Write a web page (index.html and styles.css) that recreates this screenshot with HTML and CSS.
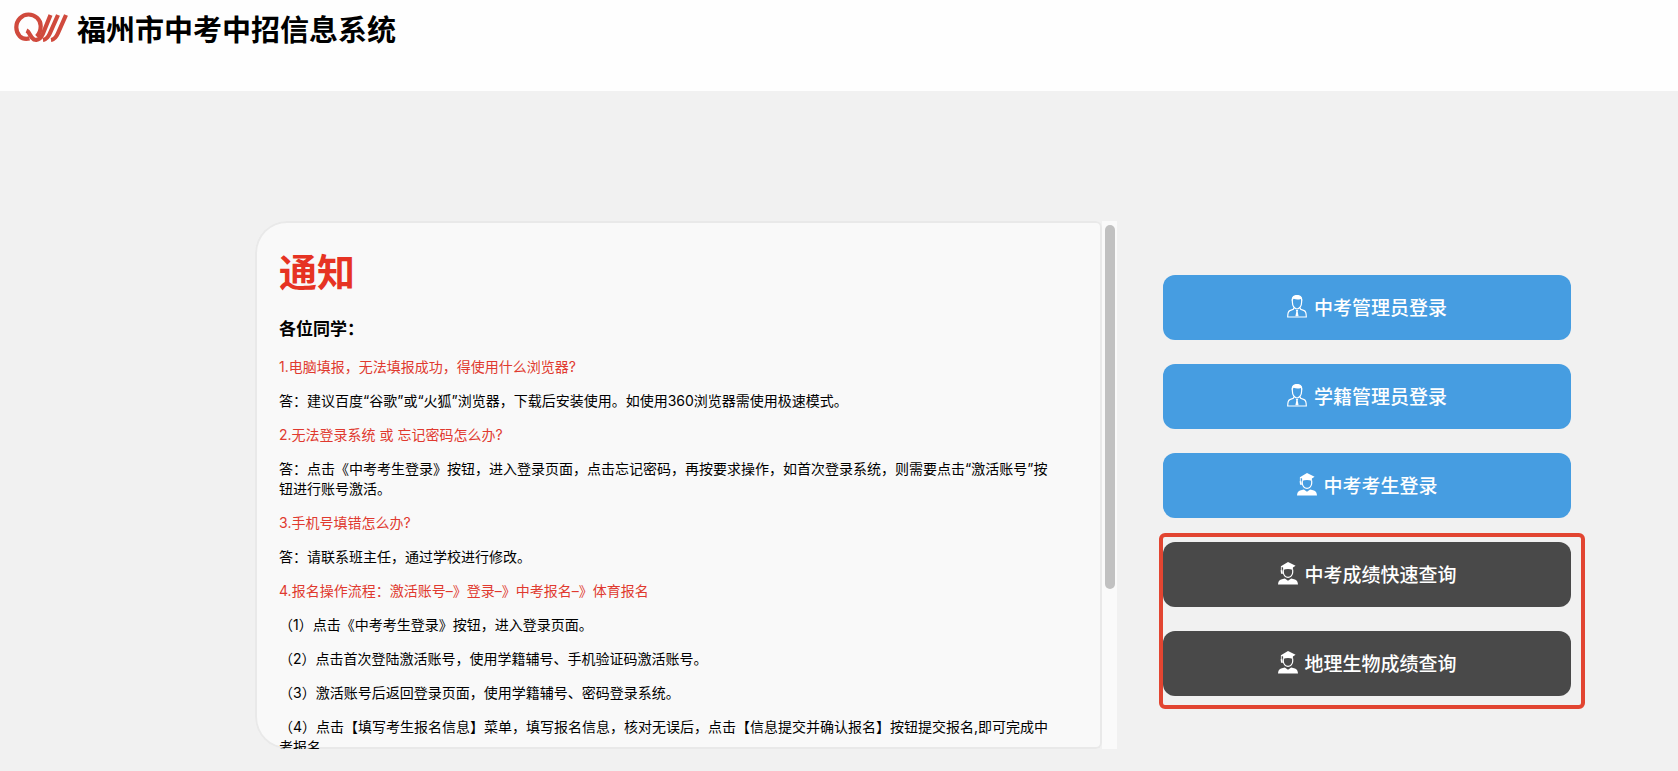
FILE: index.html
```html
<!DOCTYPE html>
<html lang="zh-CN">
<head>
<meta charset="utf-8">
<meta name="viewport" content="width=device-width, initial-scale=1">
<title>福州市中考中招信息系统</title>
<link rel="stylesheet" href="styles.css">
</head>
<body>
<svg class="sprite" aria-hidden="true">
  <symbol id="icon-admin" viewBox="0 0 20 23">
    <path d="M5.4 7.2C4.600 2.600 6.400.8 10 .8s5.400 1.800 4.600 6.400c0 3.500-2 6.800-4.600 6.800S5.400 10.700 5.400 7.200Z" fill="none" stroke="currentColor" stroke-width="1.200"/>
    <path d="M4.800 6.500C4.300 2 6.500 0 10 0s5.700 2 5.200 6.500L13.700 4C11.500 4.800 9 4.700 6.600 3.800Z" fill="currentColor"/>
    <path d="M7 12.800 6.300 14.300 2.800 15.600C1.200 16.300.7 18 .7 22H19.300C19.300 18 18.800 16.300 17.200 15.600L13.700 14.300 13 12.800" fill="none" stroke="currentColor" stroke-width="1.200"/>
    <path d="M8.800 15h2.400l-.5 1.500.9 4.800H8.400l.9-4.800Z" fill="currentColor"/>
  </symbol>
  <symbol id="icon-student" viewBox="0 0 20 23">
    <path d="M10 0 17.600 3.800 14.900 5.400V8C12 6.600 8 6.600 5.100 8V5.600L3.700 4.900V9.500H2.900V4.200Z" fill="currentColor"/>
    <path d="M5.300 7.500v2.700C5.300 13 7.500 15.400 10 15.400s4.700-2.400 4.700-5.200V7.500" fill="none" stroke="currentColor" stroke-width="1.200"/>
    <path d="M2.700 8.200h1.500l.8 3.500H3Z" fill="currentColor"/>
    <path d="M6.800 16.400 10 18.800 13.200 16.400 17 17.500C19 18.300 19.800 19.800 20 22.500H0C.2 19.800 1 18.300 3 17.500Z" fill="currentColor"/>
  </symbol>
</svg>

<header class="header">
  <svg class="logo" viewBox="0 0 54 30" aria-hidden="true">
    <g fill="none" stroke="#d04a3d">
      <path d="M15.500 26.400C7 28.500 2.300 22 2.300 15.300 2.300 8 8 2.500 14.500 2.500S26.700 7.500 26.700 14c0 4.500-1.500 8-4 10.500" stroke-width="4.200"/>
      <path d="M12.500 18.500C16 20 16 25.500 20 27.500 24.500 29 27 26 28.800 22L36.500 3M29 28C32.500 27.500 34 25.500 35.800 21.500L44 3M37 28C40.500 27.500 42 25.500 43.800 21.500L52 3" stroke-width="4.200"/>
    </g>
  </svg>
  <h1 class="title">福州市中考中招信息系统</h1>
</header>

<main class="main">
  <section class="notice" aria-labelledby="notice-title">
    <div class="notice-body">
      <h2 class="notice-title" id="notice-title">通知</h2>
      <h3 class="greeting">各位同学：</h3>
      <p class="line question">1.电脑填报，无法填报成功，得使用什么浏览器?</p>
      <p class="line">答：建议百度“谷歌”或“火狐”浏览器，下载后安装使用。如使用360浏览器需使用极速模式。</p>
      <p class="line question">2.无法登录系统 或 忘记密码怎么办?</p>
      <p class="line">答：点击《中考考生登录》按钮，进入登录页面，点击忘记密码，再按要求操作，如首次登录系统，则需要点击“激活账号”按钮进行账号激活。</p>
      <p class="line question">3.手机号填错怎么办?</p>
      <p class="line">答：请联系班主任，通过学校进行修改。</p>
      <p class="line question">4.报名操作流程：激活账号–》登录–》中考报名–》体育报名</p>
      <p class="line">（1）点击《中考考生登录》按钮，进入登录页面。</p>
      <p class="line">（2）点击首次登陆激活账号，使用学籍辅号、手机验证码激活账号。</p>
      <p class="line">（3）激活账号后返回登录页面，使用学籍辅号、密码登录系统。</p>
      <p class="line">（4）点击【填写考生报名信息】菜单，填写报名信息，核对无误后，点击【信息提交并确认报名】按钮提交报名,即可完成中考报名</p>
    </div>
    <div class="scrollbar" aria-hidden="true"><div class="thumb"></div></div>
  </section>

  <nav class="actions" aria-label="登录与查询">
    <button class="action" type="button"><svg class="icon" aria-hidden="true"><use href="#icon-admin"/></svg>中考管理员登录</button>
    <button class="action" type="button"><svg class="icon" aria-hidden="true"><use href="#icon-admin"/></svg>学籍管理员登录</button>
    <button class="action" type="button"><svg class="icon" aria-hidden="true"><use href="#icon-student"/></svg>中考考生登录</button>
    <div class="queries">
      <button class="action dark" type="button"><svg class="icon" aria-hidden="true"><use href="#icon-student"/></svg>中考成绩快速查询</button>
      <button class="action dark" type="button"><svg class="icon" aria-hidden="true"><use href="#icon-student"/></svg>地理生物成绩查询</button>
    </div>
  </nav>
</main>
</body>
</html>
```

FILE: styles.css
```css
* {
  box-sizing: border-box;
}

body {
  margin: 0;
  min-height: 100vh;
  background: #f1f1f1;
  color: #000;
  font-family: Inter, "Noto Sans CJK SC", sans-serif;
}

h1,
h2,
h3,
p {
  margin: 0;
}

.sprite {
  display: none;
}

.header {
  display: flex;
  align-items: flex-start;
  gap: 9px;
  min-height: 91px;
  padding: 12px 14px;
  background: #fefefe;
}

.logo {
  width: 54px;
  height: 30px;
}

.title {
  font-size: 29px;
  font-weight: 700;
  line-height: 38px;
}

.main {
  display: grid;
  grid-template-columns: 862fr 407fr;
  gap: 46px;
  align-items: start;
  padding: 130px 6.4% 22px 15.2%;
}

.notice {
  display: flex;
  height: 528px;
}

.notice-body {
  flex: 1;
  overflow: hidden;
  padding: 30px 48px 0 24px;
  border-radius: 32px 6px 6px 32px;
  background: #f9f9f9;
  box-shadow: inset 0 0 0 2px #e9e9e9;
}

.notice-title {
  margin-bottom: 24px;
  color: #e63323;
  font-size: 38px;
  line-height: 42px;
}

.greeting {
  margin-bottom: 16px;
  font-size: 17px;
  line-height: 24px;
}

.line {
  margin-bottom: 14px;
  font-size: 14px;
  line-height: 20px;
}

.question {
  color: #e0392f;
}

.scrollbar {
  width: 15px;
  padding: 4px 2px 4px 3px;
  background: #fafafa;
}

.thumb {
  height: 70%;
  border-radius: 5px;
  background: #c1c1c1;
}

.actions,
.queries {
  display: grid;
  gap: 24px;
}

.actions {
  padding-top: 54px;
}

.queries {
  position: relative;
}

.queries::after {
  content: "";
  position: absolute;
  inset: -9px -14px -13px -4px;
  border: 4px solid #e24531;
  border-radius: 6px;
  pointer-events: none;
}

.action {
  display: flex;
  align-items: center;
  justify-content: center;
  gap: 7px;
  height: 65px;
  padding: 0 0 3px;
  border: 0;
  border-radius: 12px;
  background: #469de1;
  color: #fff;
  font: inherit;
  font-size: 19px;
  font-weight: 500;
  cursor: pointer;
}

.dark {
  background: #494949;
}

.icon {
  width: 20px;
  height: 23px;
}
```
